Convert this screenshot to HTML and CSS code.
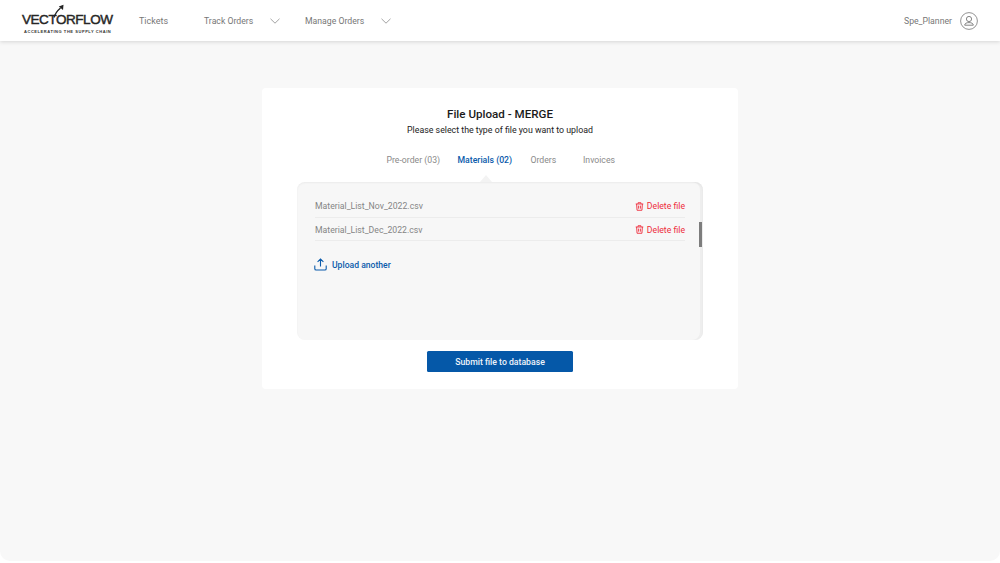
FILE: index.html
```html
<!DOCTYPE html>
<html lang="en">
<head>
<meta charset="utf-8">
<title>File Upload - MERGE</title>
<link rel="stylesheet" href="styles.css">
</head>
<body>
<div class="app">
  <header class="topbar">
    <div class="logo">
      <div class="logo-word">VECTORFLOW</div>
      <svg class="logo-arrow" viewBox="0 0 14 14" width="14" height="14" aria-hidden="true">
        <path d="M2 13.5 C3 10 5 7 8.5 4" fill="none" stroke="#222" stroke-width="1.3"/>
        <path d="M11.5 .8 L11 6 L6.8 2.6 Z" fill="#222"/>
      </svg>
      <div class="logo-tag">ACCELERATING THE SUPPLY CHAIN</div>
    </div>
    <nav class="nav">
      <a class="nav-item nav-tickets">Tickets</a>
      <a class="nav-item nav-track">Track Orders
        <svg class="chev" viewBox="0 0 10 6" width="10" height="6" aria-hidden="true"><path d="M.5.8 5 5.2 9.5.8" fill="none" stroke="#8a8a8a" stroke-width=".8"/></svg>
      </a>
      <a class="nav-item nav-manage">Manage Orders
        <svg class="chev" viewBox="0 0 10 6" width="10" height="6" aria-hidden="true"><path d="M.5.8 5 5.2 9.5.8" fill="none" stroke="#8a8a8a" stroke-width=".8"/></svg>
      </a>
    </nav>
    <div class="user">
      <span>Spe_Planner</span>
      <svg viewBox="0 0 18 18" width="18" height="18" aria-hidden="true">
        <circle cx="9" cy="9" r="8.4" fill="none" stroke="#777" stroke-width=".8"/>
        <circle cx="9" cy="7" r="2.6" fill="none" stroke="#777" stroke-width=".9"/>
        <path d="M4.7 13.2c0-1.8 1.8-2.6 4.3-2.6s4.3.8 4.3 2.6z" fill="none" stroke="#777" stroke-width=".9"/>
      </svg>
    </div>
  </header>

  <main class="content">
    <section class="card">
      <h1 class="title">File Upload - MERGE</h1>
      <p class="subtitle">Please select the type of file you want to upload</p>
      <div class="tabs">
        <span class="tab tab-pre">Pre-order (03)</span>
        <span class="tab tab-mat active">Materials (02)</span>
        <span class="tab tab-ord">Orders</span>
        <span class="tab tab-inv">Invoices</span>
      </div>
      <div class="panel">
        <div class="notch"></div>
        <div class="scrollbar"><div class="thumb"></div></div>
        <ul class="files">
          <li class="file">
            <span>Material_List_Nov_2022.csv</span>
            <a class="delete">
              <svg viewBox="0 0 10 10" width="9" height="9" aria-hidden="true"><path d="M.8 2.2h8.4M3.4 2V.8h3.2V2M1.8 2.2l.5 7h5.4l.5-7M4 4v3.4M6 4v3.4" fill="none" stroke="#ee2b3b" stroke-width="1"/></svg>
              Delete file
            </a>
          </li>
          <li class="file">
            <span>Material_List_Dec_2022.csv</span>
            <a class="delete">
              <svg viewBox="0 0 10 10" width="9" height="9" aria-hidden="true"><path d="M.8 2.2h8.4M3.4 2V.8h3.2V2M1.8 2.2l.5 7h5.4l.5-7M4 4v3.4M6 4v3.4" fill="none" stroke="#ee2b3b" stroke-width="1"/></svg>
              Delete file
            </a>
          </li>
        </ul>
        <a class="upload">
          <svg viewBox="0 0 13 13" width="13" height="13" aria-hidden="true"><path d="M6.5 8.5V1.2M3.6 3.8 6.5 1l2.9 2.8M.8 7.5v3.2c0 .8.5 1.3 1.3 1.3h8.8c.8 0 1.3-.5 1.3-1.3V7.5" fill="none" stroke="#0a5bab" stroke-width="1.1"/></svg>
          Upload another
        </a>
      </div>
      <button class="submit" type="button">Submit file to database</button>
    </section>
  </main>
</div>
</body>
</html>
```
FILE: styles.css
```css
* { box-sizing: border-box; }
html, body { margin: 0; height: 100%; background: #fff; }
body { font-family: Roboto, "Liberation Sans", sans-serif; color: #222; overflow: hidden; }
.app {
  height: 561px;
  background: #f8f8f8;
  border-radius: 0 0 10px 10px;
  display: flex;
  flex-direction: column;
  overflow: hidden;
}
.topbar {
  height: 41px;
  flex: none;
  background: #fff;
  box-shadow: 0 1px 4px rgba(0,0,0,.14);
  display: flex;
  align-items: center;
  padding: 0 22px;
  position: relative;
}
.logo { width: 117px; height: 28px; flex: none; position: relative; margin-top: 0; }
.logo-word {
  font-family: "Liberation Sans", sans-serif;
  font-size: 13.5px;
  line-height: 12px;
  font-weight: 400;
  color: #262626;
  letter-spacing: -.45px;
  margin-top: 7px;
  -webkit-text-stroke: .45px #262626;
  white-space: nowrap;
}
.logo-arrow { position: absolute; left: 30px; top: -3px; }
.logo-tag {
  font-family: "Liberation Sans", sans-serif;
  font-size: 4px;
  line-height: 5px;
  font-weight: 700;
  letter-spacing: .56px;
  color: #333;
  margin: 3px 0 0 2px;
  white-space: nowrap;
}
.nav { display: flex; align-items: center; font-size: 8.7px; color: #777; }
.nav-item { display: flex; align-items: center; white-space: nowrap; }
.nav-tickets { width: 65px; margin-top: 1px; font-size: 9px; }
.nav-track { width: 101px; }
.chev { margin-left: 16.5px; }
.nav-manage { width: 90px; }
.user {
  margin-left: auto;
  display: flex;
  align-items: center;
  gap: 8px;
  font-size: 8.7px;
  color: #777;
}
.content { flex: 1; padding-top: 47px; display: flex; justify-content: center; align-items: flex-start; }
.card {
  width: 476px;
  height: 301px;
  background: #fff;
  border-radius: 4px;
  padding-top: 18px;
  display: flex;
  flex-direction: column;
  align-items: center;
}
.title { margin: 0; font-size: 11.6px; line-height: 16px; font-weight: 500; color: #1a1a1a; }
.subtitle { margin: 2px 0 0; font-size: 8.8px; line-height: 12px; color: #222; }
.tabs {
  display: flex;
  align-self: flex-start;
  margin: 18px 0 0 124.5px;
  font-size: 8.7px;
  line-height: 12px;
  color: #8a8a8a;
}
.tab { white-space: nowrap; }
.tab-pre { width: 71px; }
.tab-mat { width: 73px; }
.tab-ord { width: 52.5px; }
.active { color: #0a5bab; font-weight: 500; }
.panel {
  width: 406px;
  height: 158px;
  margin-top: 16px;
  background: #f7f7f7;
  border-radius: 8px;
  box-shadow: inset 0 1px 2px rgba(0,0,0,.05), inset -3px 0 0 #eeeeee;
  padding: 12px 18px 0;
  position: relative;
  flex: none;
}
.notch {
  position: absolute;
  left: 183px;
  top: -7px;
  width: 0;
  height: 0;
  border-left: 6px solid transparent;
  border-right: 6px solid transparent;
  border-bottom: 7px solid #f3f3f3;
}
.scrollbar { position: absolute; right: 1px; top: 6px; bottom: 6px; width: 3px; }
.thumb { position: absolute; top: 34px; left: 0; width: 3px; height: 25px; background: #7d7d7d; }
.files { list-style: none; margin: 0; padding: 0; width: 370px; }
.file {
  height: 23.5px;
  display: flex;
  align-items: center;
  justify-content: space-between;
  border-bottom: 1px solid #ececec;
  font-size: 8.7px;
  color: #858585;
}
.file span, .delete { position: relative; top: 1px; }
.delete { display: flex; align-items: center; gap: 3px; color: #ee2b3b; }
.upload {
  display: flex;
  align-items: center;
  gap: 5px;
  margin: 17px 0 0 -1px;
  font-size: 8.6px;
  font-weight: 500;
  color: #0a5bab;
}
.submit {
  width: 146px;
  height: 21px;
  margin-top: 11px;
  border: 0;
  border-radius: 1.5px;
  background: #0558a8;
  color: #eef3fa;
  font-family: inherit;
  font-size: 8.7px;
  font-weight: 500;
  padding: 0;
}
```
